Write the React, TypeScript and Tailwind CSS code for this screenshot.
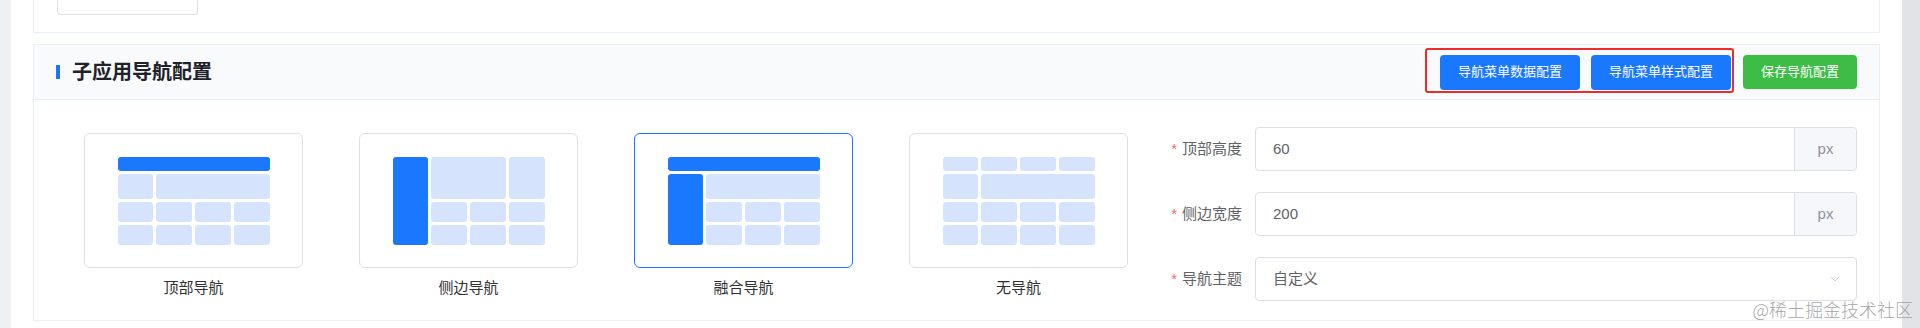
import { ChevronDown } from 'lucide-react';

type Layout = 'top' | 'side' | 'mix' | 'none';

const LAYOUTS: { key: Layout; label: string }[] = [
  { key: 'top', label: '顶部导航' },
  { key: 'side', label: '侧边导航' },
  { key: 'mix', label: '融合导航' },
  { key: 'none', label: '无导航' },
];

const light = 'rounded-[3px] bg-[#d5e4fc]';
const blue = 'rounded-[3px] bg-[#1a78ff]';

function Cells({ n }: { n: number }) {
  return (
    <>
      {Array.from({ length: n }).map((_, i) => (
        <div key={i} className={light} />
      ))}
    </>
  );
}

function Preview({ type }: { type: Layout }) {
  return (
    <div className="grid h-[88px] w-[152px] grid-cols-4 grid-rows-[14px_25px_20px_20px] gap-[3px]">
      {type === 'top' && (
        <>
          <div className={`col-span-4 ${blue}`} />
          <div className={light} />
          <div className={`col-span-3 ${light}`} />
          <Cells n={8} />
        </>
      )}
      {type === 'side' && (
        <>
          <div className={`row-span-4 ${blue}`} />
          <div className={`col-span-2 row-span-2 ${light}`} />
          <div className={`row-span-2 ${light}`} />
          <Cells n={6} />
        </>
      )}
      {type === 'mix' && (
        <>
          <div className={`col-span-4 ${blue}`} />
          <div className={`row-span-3 ${blue}`} />
          <div className={`col-span-3 ${light}`} />
          <Cells n={6} />
        </>
      )}
      {type === 'none' && (
        <>
          <Cells n={4} />
          <div className={light} />
          <div className={`col-span-3 ${light}`} />
          <Cells n={8} />
        </>
      )}
    </div>
  );
}

function FormItem({ label, children }: { label: string; children: React.ReactNode }) {
  return (
    <div className="flex h-[44px] items-center">
      <label className="flex w-[99px] shrink-0 items-center justify-end pr-[13px] text-[15px] text-[#606266]">
        <span className="mr-[5px] text-[#f56c6c]">*</span>
        {label}
      </label>
      {children}
    </div>
  );
}

function PxInput({ value }: { value: string }) {
  return (
    <div className="flex h-[44px] flex-1 overflow-hidden rounded-[4px] border border-[#dcdfe6]">
      <div className="flex flex-1 items-center pl-[17px] text-[15px] text-[#606266]">{value}</div>
      <div className="flex w-[62px] items-center justify-center border-l border-[#dcdfe6] bg-[#f5f7fa] text-[15px] text-[#909399]">
        px
      </div>
    </div>
  );
}

export default function App() {
  const selected: Layout = 'mix';

  return (
    <div className="relative flex h-[328px] w-[1920px] overflow-hidden bg-white font-['Liberation_Sans','Noto_Sans_CJK_SC',sans-serif]">
      <div className="w-[11px] shrink-0 bg-[#eef0f3]" />

      <main className="flex-1 px-[22px]">
        {/* previous card, cut off at the top */}
        <div className="h-[33px] border-x border-b border-[#ebeef5] px-[23px]">
          <div className="h-[15px] w-[141px] rounded-b-[4px] border-x border-b border-[#dcdfe6]" />
        </div>

        {/* 子应用导航配置 */}
        <section className="mt-[11px] border border-[#ebeef5]">
          <div className="flex h-[55px] items-center justify-between border-b border-[#ebeef5] bg-[#f8fafc] px-[22px]">
            <div className="flex items-center">
              <span className="mr-3 h-[14px] w-[4px] bg-[#1a78ff]" />
              <h2 className="text-[20px] font-bold text-[#1f2329]">子应用导航配置</h2>
            </div>
            <div className="flex items-center gap-3">
              <div className="relative flex gap-[11px]">
                <div className="absolute -top-[7px] -right-[3px] -bottom-[3px] -left-[15px] rounded-[3px] border-2 border-[#ec2b2b]" />
                <button className="relative h-[35px] w-[140px] rounded-[4px] bg-[#1a78ff] text-[13px] text-white">
                  导航菜单数据配置
                </button>
                <button className="relative h-[35px] w-[140px] rounded-[4px] bg-[#1a78ff] text-[13px] text-white">
                  导航菜单样式配置
                </button>
              </div>
              <button className="h-[34px] w-[114px] rounded-[4px] bg-[#3dbd45] text-[13px] text-white">
                保存导航配置
              </button>
            </div>
          </div>

          <div className="flex px-[22px]">
            <div className="grid w-[1100px] shrink-0 grid-cols-4 pt-[33px]">
              {LAYOUTS.map((l) => (
                <div key={l.key} className="flex flex-col items-center">
                  <div
                    className={`flex h-[135px] w-[219px] items-center justify-center rounded-[6px] border ${
                      l.key === selected ? 'border-[#1a78ff]' : 'border-[#dcdfe6]'
                    }`}
                  >
                    <Preview type={l.key} />
                  </div>
                  <div className="mt-[9px] text-[15px] leading-[22px] text-[#303133]">{l.label}</div>
                </div>
              ))}
            </div>

            <div className="flex flex-1 flex-col gap-[21px] pt-[27px] pb-[19px]">
              <FormItem label="顶部高度">
                <PxInput value="60" />
              </FormItem>
              <FormItem label="侧边宽度">
                <PxInput value="200" />
              </FormItem>
              <FormItem label="导航主题">
                <div className="flex h-[44px] flex-1 items-center justify-between rounded-[4px] border border-[#dcdfe6] pr-[13px] pl-[17px] text-[15px] text-[#606266]">
                  <span>自定义</span>
                  <ChevronDown size={16} strokeWidth={1.2} className="text-[#c0c4cc]" />
                </div>
              </FormItem>
            </div>
          </div>
        </section>
      </main>

      <div className="w-[18px] shrink-0 bg-[#e2e3e6]" />

      <div className="absolute top-[300px] right-[7px] text-[18px] leading-[18px] text-[#9b9b9b]/90 font-['Noto_Sans_CJK_SC',sans-serif] font-light">
        @稀土掘金技术社区
      </div>
    </div>
  );
}
